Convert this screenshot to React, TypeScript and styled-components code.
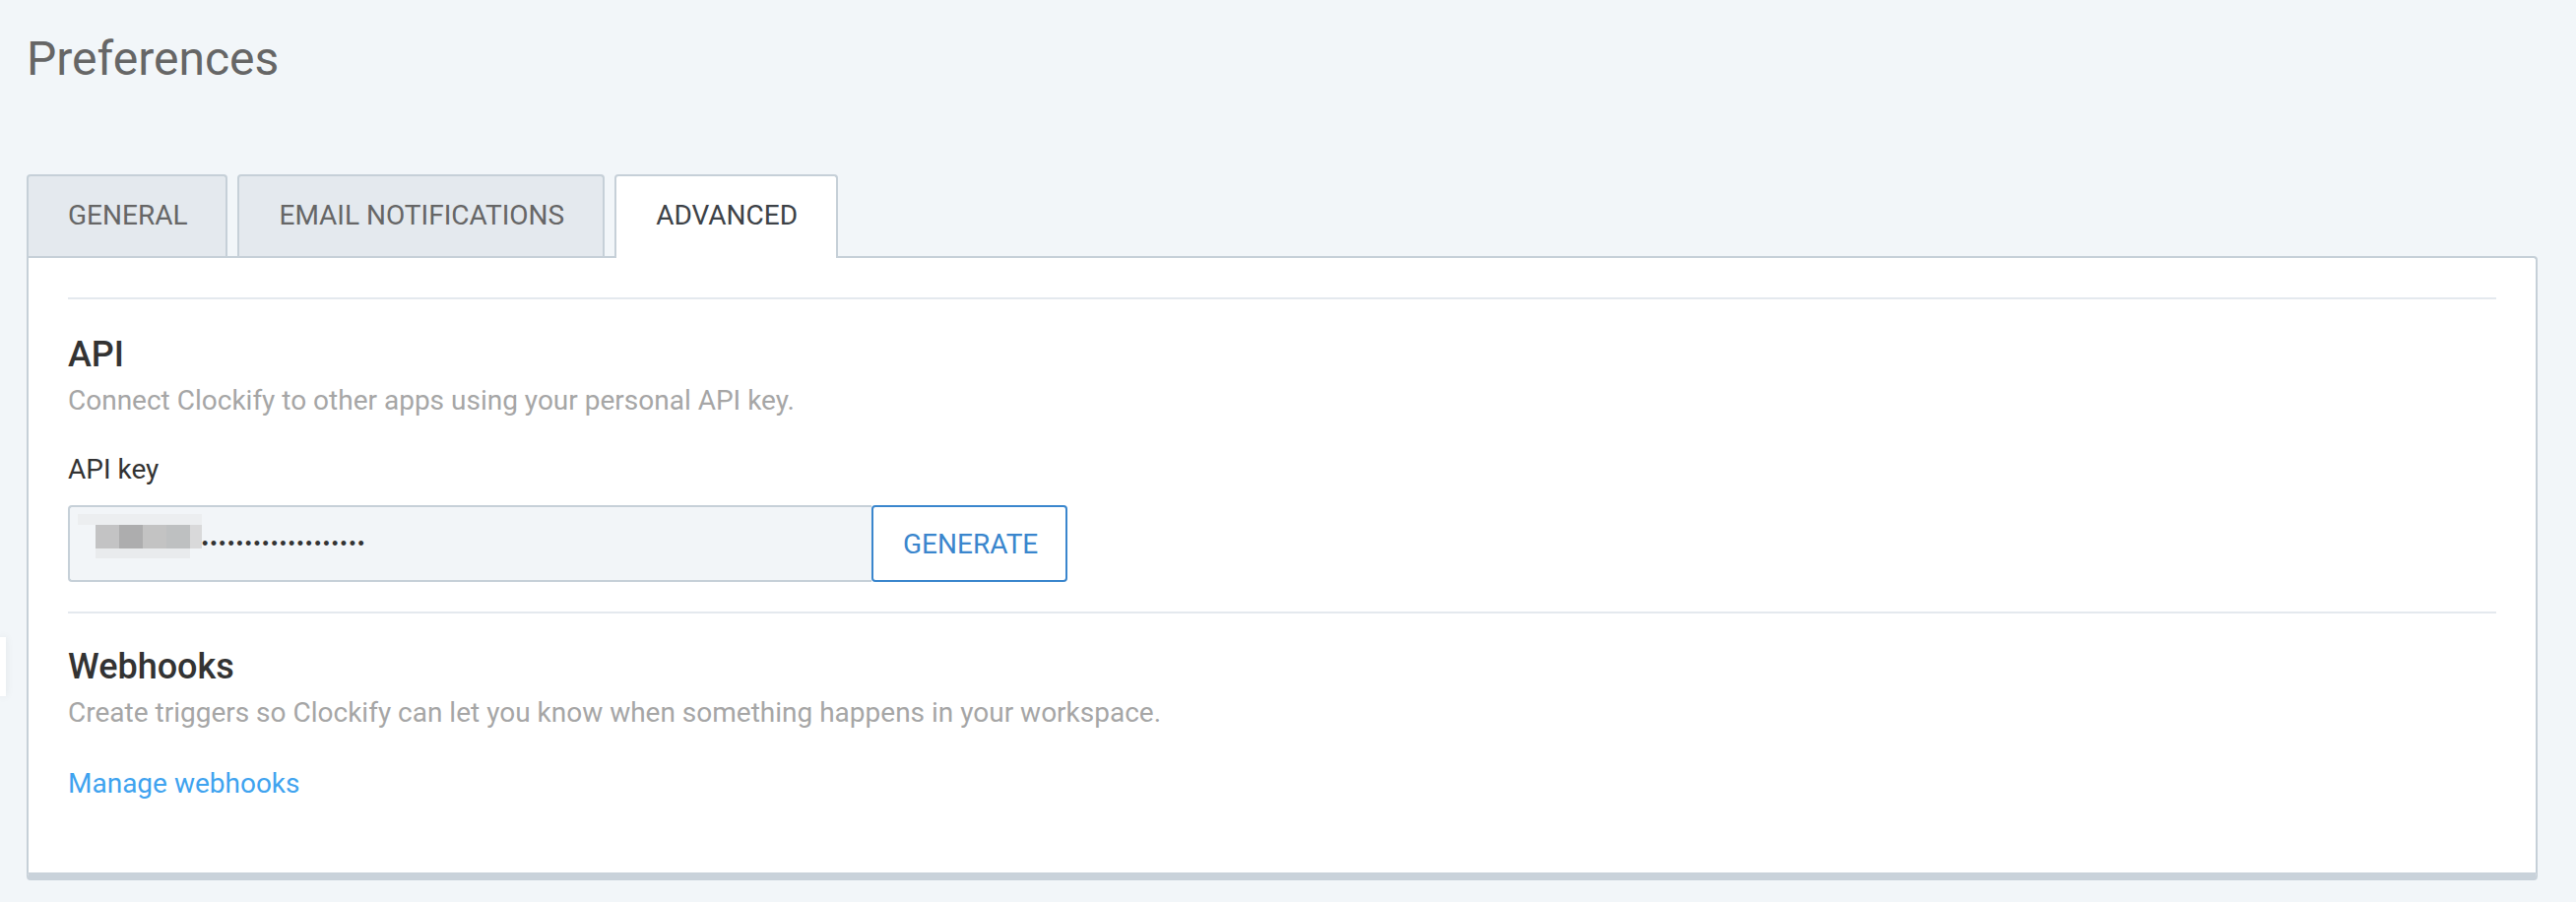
import React from "react";
import styled, { createGlobalStyle } from "styled-components";

const Global = createGlobalStyle`
  html, body {
    margin: 0;
    padding: 0;
    min-height: 100%;
    background: #f2f6f9;
    font-family: Roboto, "Liberation Sans", Arial, sans-serif;
  }
  * { box-sizing: border-box; }
`;

const Page = styled.div`
  position: relative;
  min-height: 916px;
  padding: 32px 39px 0 27px;
`;

const EdgeTab = styled.div`
  position: absolute;
  left: 0;
  top: 647px;
  width: 6px;
  height: 60px;
  background: #ffffff;
  box-shadow: 0 0 8px rgba(0, 0, 0, 0.08);
`;

const Title = styled.h1`
  margin: 0;
  font-size: 48px;
  line-height: 56px;
  font-weight: 400;
  color: #666666;
`;

const TabBar = styled.div`
  display: flex;
  align-items: flex-end;
  gap: 10px;
  margin-top: 89px;
`;

const Tab = styled.div<{ $active?: boolean }>`
  position: relative;
  z-index: ${(p) => (p.$active ? 1 : 0)};
  display: flex;
  align-items: center;
  height: ${(p) => (p.$active ? 85 : 83)}px;
  margin-bottom: ${(p) => (p.$active ? -2 : 0)}px;
  padding: 0 39px ${(p) => (p.$active ? 4 : 2)}px 40px;
  border: 2px solid #c6d0d8;
  border-bottom: none;
  border-radius: 4px 4px 0 0;
  background: ${(p) => (p.$active ? "#ffffff" : "#e4e9ee")};
  color: ${(p) => (p.$active ? "#3d4247" : "#666666")};
  font-size: 28px;
  line-height: 32px;
  text-transform: uppercase;
  white-space: nowrap;
`;

const Panel = styled.div`
  background: #ffffff;
  border: 2px solid #c6d0d8;
  border-bottom: 8px solid #c9d2da;
  border-radius: 0 4px 4px 4px;
  padding: 40px;
`;

const Section = styled.section<{ $first?: boolean }>`
  border-top: 2px solid #e4e9ee;
  padding: ${(p) => (p.$first ? 35 : 33)}px 0 30px;
`;

const SectionTitle = styled.h2`
  margin: 0;
  font-size: 36px;
  line-height: 42px;
  font-weight: 500;
  color: #333333;
`;

const Description = styled.p`
  margin: 6px 0 0;
  font-size: 28px;
  line-height: 40px;
  color: #a6a6a6;
`;

const FieldLabel = styled.div`
  margin-top: 30px;
  font-size: 28px;
  line-height: 40px;
  color: #333333;
`;

const KeyRow = styled.div`
  display: flex;
  margin-top: 16px;
`;

const KeyField = styled.div`
  display: flex;
  align-items: center;
  width: 816px;
  height: 78px;
  padding-left: 8px;
  background: #f2f5f8;
  border: 2px solid #c6d0d8;
  border-right: none;
  border-radius: 4px 0 0 4px;
`;

const Blur = styled.div`
  display: grid;
  grid-template-columns: 18px 24px 24px 24px 24px 12px;
  grid-template-rows: 11px 24px 10px;
  margin-bottom: 15px;
`;

const BlurCell = styled.span<{ $c: string; $span?: number }>`
  background: ${(p) => p.$c};
  grid-column: span ${(p) => p.$span ?? 1};
`;

const Dots = styled.span`
  font-family: "Liberation Sans", Arial, sans-serif;
  font-size: 18px;
  letter-spacing: 2.5px;
  color: #333333;
  line-height: 1;
`;

const GenerateButton = styled.button`
  width: 199px;
  height: 78px;
  padding: 0 30px;
  background: #ffffff;
  border: 2px solid #3a86cd;
  border-radius: 4px;
  color: #3a86cd;
  font-family: Roboto, "Liberation Sans", Arial, sans-serif;
  font-size: 28px;
  text-align: left;
  text-transform: uppercase;
  cursor: pointer;
`;

const Link = styled.a`
  display: block;
  margin-top: 32px;
  font-size: 28px;
  line-height: 40px;
  color: #3fa3ef;
  text-decoration: none;
`;

const blurCells: { c: string; span?: number }[] = [
  { c: "#eceef0", span: 6 },
  { c: "#f2f5f8" },
  { c: "#c3c3c4" },
  { c: "#adadae" },
  { c: "#c3c3c3" },
  { c: "#bec0c1" },
  { c: "#d9d9da" },
  { c: "transparent" },
  { c: "#e9ebed", span: 4 },
  { c: "transparent" },
];

export default function App() {
  return (
    <>
      <Global />
      <Page>
        <EdgeTab />
        <Title>Preferences</Title>
        <TabBar>
          <Tab>General</Tab>
          <Tab>Email notifications</Tab>
          <Tab $active>Advanced</Tab>
        </TabBar>
        <Panel>
          <Section $first>
            <SectionTitle>API</SectionTitle>
            <Description>Connect Clockify to other apps using your personal API key.</Description>
            <FieldLabel>API key</FieldLabel>
            <KeyRow>
              <KeyField>
                <Blur>
                  {blurCells.map((cell, i) => (
                    <BlurCell key={i} $c={cell.c} $span={cell.span} />
                  ))}
                </Blur>
                <Dots>{"•".repeat(19)}</Dots>
              </KeyField>
              <GenerateButton>Generate</GenerateButton>
            </KeyRow>
          </Section>
          <Section>
            <SectionTitle>Webhooks</SectionTitle>
            <Description>Create triggers so Clockify can let you know when something happens in your workspace.</Description>
            <Link href="#">Manage webhooks</Link>
          </Section>
        </Panel>
      </Page>
    </>
  );
}
